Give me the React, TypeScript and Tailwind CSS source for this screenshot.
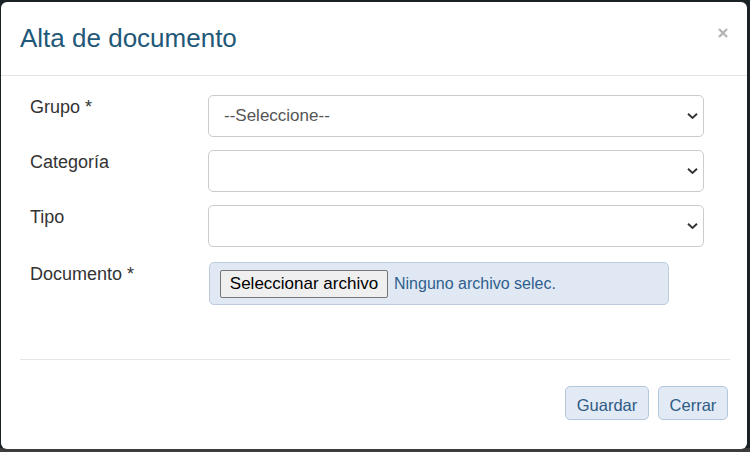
import React from "react";

function Chevron() {
  return (
    <svg
      width="11"
      height="7"
      viewBox="0 0 11 7"
      className="pointer-events-none absolute right-[6px] top-1/2 -translate-y-1/2"
    >
      <path d="M1 1.2 L5.5 5.5 L10 1.2" fill="none" stroke="#333" strokeWidth="1.9" />
    </svg>
  );
}

function SelectField({ value }: { value?: string }) {
  return (
    <div className="relative h-[42px] w-[496px]">
      <select
        defaultValue={value ?? ""}
        className="h-full w-full appearance-none rounded-[5px] border border-[#cccccc] bg-white pl-[15px] text-[17px] text-[#555555] outline-none"
        style={{ fontFamily: '"Liberation Sans", Arial, sans-serif' }}
      >
        {value ? <option value={value}>{value}</option> : <option value=""></option>}
      </select>
      <Chevron />
    </div>
  );
}

function Row({ label, children, mt }: { label: string; children: React.ReactNode; mt: string }) {
  return (
    <div className={`flex ${mt}`}>
      <label className="w-[178px] pt-[2px] text-[18px] leading-[20px] text-[#333333]">{label}</label>
      {children}
    </div>
  );
}

export default function App() {
  return (
    <div
      className="relative h-[452px] w-[750px] overflow-hidden bg-[#1b2226]"
      style={{ fontFamily: '"Liberation Sans", Arial, sans-serif' }}
    >
      <div className="absolute bottom-0 left-0 h-[4px] w-full bg-[#3c3c3c]" />
      <div className="relative ml-[1px] mt-[2px] flex h-[447px] w-[746px] flex-col rounded-[6px] bg-white">
        <div className="relative h-[74px] border-b border-[#e5e5e5] pl-[19px] pt-[22px]">
          <h4 className="text-[26px] leading-[28px] text-[#1f5878]">Alta de documento</h4>
          <svg width="10" height="10" viewBox="0 0 10 10" className="absolute right-[19px] top-[26px]">
            <path d="M1 1 L9 9 M9 1 L1 9" stroke="#b5b5b5" strokeWidth="2.4" />
          </svg>
        </div>
        <div className="h-[283px] pl-[29px] pt-[19px]">
          <Row label="Grupo *" mt="">
            <SelectField value="--Seleccione--" />
          </Row>
          <Row label="Categoría" mt="mt-[13px]">
            <SelectField />
          </Row>
          <Row label="Tipo" mt="mt-[13px]">
            <SelectField />
          </Row>
          <Row label="Documento *" mt="mt-[15px]">
            <div className="ml-[1px] flex h-[43px] w-[460px] items-center rounded-[5px] border border-[#bccbdb] bg-[#dfe8f3] pl-[10px]">
              <button className="h-[28px] w-[168px] rounded-[2px] border border-[#767676] bg-[#efefef] px-0 text-[17px] leading-[20px] text-black">
                Seleccionar archivo
              </button>
              <span className="ml-[6px] text-[16px] text-[#2f5f8e]">Ninguno archivo selec.</span>
            </div>
          </Row>
        </div>
        <div className="ml-[19px] mr-[17px] h-px bg-[#e5e5e5]" />
        <div className="flex justify-end gap-[9px] pr-[19px] pt-[26px]">
          <button className="h-[34px] w-[84px] rounded-[5px] border border-[#b5c7db] bg-[#e2eaf5] pt-[4px] text-[16.5px] text-[#2e5a84]">
            Guardar
          </button>
          <button className="h-[34px] w-[70px] rounded-[5px] border border-[#b5c7db] bg-[#e2eaf5] pt-[4px] text-[16.5px] text-[#2e5a84]">
            Cerrar
          </button>
        </div>
      </div>
    </div>
  );
}
